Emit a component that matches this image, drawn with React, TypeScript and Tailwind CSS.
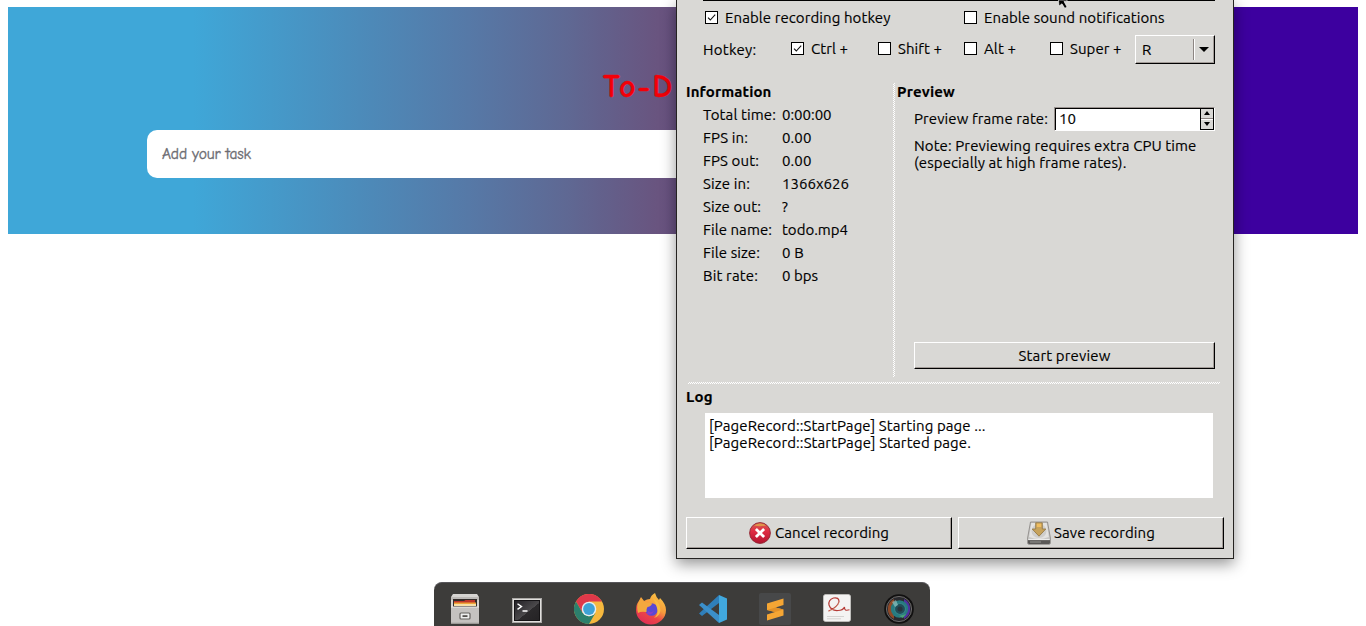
import { useLayoutEffect, useRef, useState } from "react";
import type { ReactNode } from "react";

/* Single line of text tracked so that it fills a given advance width. */
function Fit({ w, children, className = "" }: { w: number; children: string; className?: string }) {
  const ref = useRef<HTMLSpanElement>(null);
  const [spacing, setSpacing] = useState(0);
  useLayoutEffect(() => {
    if (!ref.current) return;
    const natural = ref.current.getBoundingClientRect().width - spacing * children.length;
    setSpacing((w - natural) / children.length);
  }, [w, children]);
  return (
    <span ref={ref} className={`inline-block whitespace-pre ${className}`} style={{ letterSpacing: `${spacing}px` }}>
      {children}
    </span>
  );
}

function Check({ label, w, checked = false, className = "" }: { label: string; w: number; checked?: boolean; className?: string }) {
  return (
    <label className={`flex items-center gap-[7px] ${className}`}>
      <span className="flex size-[13px] shrink-0 items-center justify-center border border-black bg-white">
        {checked && (
          <svg viewBox="0 0 9 9" className="size-[9px]" fill="none" stroke="#111" strokeWidth="1.1">
            <path d="M1 4.6 L3.3 7 L8.2 1.6" />
          </svg>
        )}
      </span>
      <Fit w={w}>{label}</Fit>
    </label>
  );
}

function Button({ children, className = "" }: { children: ReactNode; className?: string }) {
  return (
    <button
      className={`flex items-center justify-center border border-t-white border-l-white border-r-black border-b-black bg-[#d9d8d5] shadow-[inset_-1px_-1px_0_#a39c98] ${className}`}
    >
      {children}
    </button>
  );
}

const info: [string, number, string, number][] = [
  ["Total time:", 73, "0:00:00", 49.5],
  ["FPS in:", 45, "0.00", 29.5],
  ["FPS out:", 56, "0.00", 29.5],
  ["Size in:", 47, "1366x626", 67],
  ["Size out:", 58, "?", 7],
  ["File name:", 69, "todo.mp4", 66],
  ["File size:", 57, "0 B", 22],
  ["Bit rate:", 55, "0 bps", 36],
];

function CancelIcon() {
  return (
    <svg viewBox="0 0 22 22" className="size-[22px]">
      <defs>
        <linearGradient id="cancel" x1="0" y1="0" x2="0" y2="1">
          <stop offset="0" stopColor="#d4604f" />
          <stop offset=".4" stopColor="#e02d44" />
          <stop offset="1" stopColor="#b3142f" />
        </linearGradient>
      </defs>
      <circle cx="11" cy="11" r="10.4" fill="url(#cancel)" stroke="#8e2230" strokeWidth=".9" />
      <path d="M5 3.4 Q11 -.6 17 3.4 Q11 5 5 3.4" fill="#e0a04a" opacity=".85" />
      <path d="M6.900 6.900 L15.100 15.100 M15.100 6.900 L6.900 15.100" stroke="#fff" strokeWidth="2.800" />
    </svg>
  );
}

function SaveIcon() {
  return (
    <svg viewBox="0 0 24 24" className="size-6">
      <path d="M3.5 1 H20.5 L23.4 17 V22 Q23.4 23.3 22 23.3 H2 Q.6 23.3 .6 22 V17 Z" fill="#c9c8c6" stroke="#85827f" strokeWidth=".8" />
      <path d="M4.3 2 H19.7 L21.8 16 Q12 20 2.2 16 Z" fill="#e4e3e1" />
      <ellipse cx="12" cy="10" rx="7.5" ry="7" fill="#cfcecc" />
      <path d="M1 18.6 H23 V21.8 Q23 23 21.7 23 H2.3 Q1 23 1 21.8 Z" fill="#5b5957" />
      <path d="M1.2 18.6 H22.8" stroke="#f6f6f6" strokeWidth="1" />
      <path d="M3 21 H14" stroke="#8d8b88" strokeWidth="1.2" />
      <path d="M8.7 1.8 H15.3 V8 H18.8 L12 15.2 L5.2 8 H8.7 Z" fill="#c7a35c" stroke="#8f7340" strokeWidth=".8" />
      <path d="M9.8 2.6 H14.2 V6 H9.8 Z" fill="#efbd60" />
    </svg>
  );
}

function FilesIcon() {
  return (
    <svg viewBox="0 0 30 30" className="size-[30px]">
      <path d="M3 0 H27 L29 3 V30 H1 V3 Z" fill="#d6d4d2" />
      <path d="M1 3 H29 V6 H1 Z" fill="#bdbab8" />
      <rect x="3" y="5" width="24" height="9" fill="#322b29" />
      <path d="M4 7 H14 L15.500 6 H25 V9 H4 Z" fill="#bd3529" />
      <rect x="4" y="8.500" width="22" height="2" fill="#f0a539" />
      <rect x="4" y="10" width="22" height="2" fill="#f6dfa8" />
      <path d="M1 13 H29 V29 H1 Z" fill="#c5c2c0" />
      <path d="M1 13 H29" stroke="#eeecea" />
      <rect x="10" y="19" width="10" height="6" rx="1" fill="#eee" stroke="#65625f" strokeWidth="1.2" />
      <rect x="12.500" y="21.200" width="5" height="1.800" fill="#55524f" />
      <path d="M1 29.300 H29" stroke="#8d8a88" />
    </svg>
  );
}

function TerminalIcon() {
  return (
    <svg viewBox="0 0 30 30" className="size-[30px]">
      <defs>
        <linearGradient id="screen" x1="0" y1="0" x2="1" y2="1">
          <stop offset="0" stopColor="#232126" />
          <stop offset=".55" stopColor="#4b494b" />
          <stop offset=".56" stopColor="#2c2a2c" />
          <stop offset="1" stopColor="#252325" />
        </linearGradient>
      </defs>
      <rect x=".5" y="4.500" width="29" height="24" fill="#e0dfdd" stroke="#aaa8a6" />
      <rect x="2.500" y="6.500" width="25" height="20" fill="url(#screen)" stroke="#151315" />
      <path d="M5.500 9.800 L9.500 12.600 L5.500 15.400 M10.500 17 H15.500" fill="none" stroke="#fff" strokeWidth="1.400" />
    </svg>
  );
}

function ChromeIcon() {
  return (
    <svg viewBox="0 0 30 30" className="size-[30px]">
      <circle cx="15" cy="15" r="15" fill="#f6b83e" />
      <path d="M2 7.500 A15 15 0 0 1 28 7.500 H15 L8.500 18.750 Z" fill="#e0384a" />
      <path d="M2 7.500 A15 15 0 0 0 15 30 L21.500 18.750 L15 22.500 L8.500 18.750 Z" fill="#2c806d" />
      <circle cx="15" cy="15" r="7.300" fill="#e6eef2" />
      <circle cx="15" cy="15" r="5.900" fill="#3fa2d6" />
    </svg>
  );
}

function FirefoxIcon() {
  return (
    <svg viewBox="0 0 30 30" className="size-[30px] overflow-visible">
      <defs>
        <linearGradient id="fox" x1=".85" y1="0" x2=".3" y2="1">
          <stop offset="0" stopColor="#fbc845" />
          <stop offset=".45" stopColor="#f69c3c" />
          <stop offset=".7" stopColor="#ec4548" />
          <stop offset="1" stopColor="#e02d55" />
        </linearGradient>
      </defs>
      <path d="M3 7 L5 3 L8 7 Q11 5 14 5 Q15 1 19 -1 Q20 3 23 6 L24 4 Q30 10 30 16 A15 14.500 0 0 1 0 16 Q0 10 3 7 Z" fill="url(#fox)" />
      <circle cx="15.500" cy="15.500" r="6.300" fill="#5b48d4" />
      <path d="M3 7 L5 4 L8 7.500 Q11 9 16 9.200 Q16 12 11.500 13 Q10 15 10.500 18 Q5 17 2 19 Q0 12 3 7" fill="#f3a83e" />
      <path d="M17 4 Q24 8 24.500 16 Q24 22 18 24 Q23 20 21 14 Q20 9 17 4" fill="#f9bc43" />
      <path d="M12 17 Q15 19.500 18 16.500 Q16 22 11 20 Z" fill="#8a3fc8" />
    </svg>
  );
}

function CodeIcon() {
  return (
    <svg viewBox="0 0 30 30" className="size-[30px]">
      <path d="M21 1 V9 L4 22 L1 19.500 Z" fill="#2f7fba" />
      <path d="M1 11 L4 8.500 L21 21 V29 Z" fill="#3b8fca" />
      <path d="M21 1 L29 4.500 V25.500 L21 29 Z" fill="#41a8de" />
    </svg>
  );
}

function SublimeIcon() {
  return (
    <svg viewBox="0 0 32 32" className="size-8">
      <rect width="32" height="32" rx="2" fill="#474849" />
      <path d="M8 10.500 L24.500 5.500 V12 L16.500 14.500 L24.500 16.500 V22.500 L8 27.500 V21.500 L16 19 L8 17 Z" fill="#f5a634" />
      <path d="M8 17 L16.500 14.500 L24.500 16.500 L16 19 Z" fill="#e29129" />
    </svg>
  );
}

function NotesIcon() {
  return (
    <svg viewBox="0 0 28 28" className="mb-0.5 size-7" fill="none">
      <rect x=".4" y=".4" width="27.200" height="27.200" rx="2.500" fill="#f4f3f2" stroke="#c8c6c4" strokeWidth=".8" />
      <path d="M5.500 17 Q15 13 16 7.500 Q16 3 10.500 4 Q5 6 6 11 Q8 17 15 16.500 Q20 16.500 21.500 13 Q21 17.500 26.500 15.800" stroke="#b63b36" strokeWidth="1.200" />
      <path d="M5.500 17.500 Q15 13.500 16 8" stroke="#d9a07d" strokeWidth=".6" />
      <path d="M4 22.500 H21 M4 24.800 H18" stroke="#d5d3d1" strokeWidth="1" />
    </svg>
  );
}

function LensIcon() {
  return (
    <svg viewBox="0 0 30 30" className="size-[30px]">
      <circle cx="15" cy="15" r="14.800" fill="#111010" />
      <circle cx="15" cy="15" r="12.600" fill="#2a2a2e" stroke="#8b8886" strokeWidth=".7" />
      <path d="M10 5 A11.200 11.200 0 0 0 10 25 Z" fill="#8d4928" />
      <path d="M20 5 A11.200 11.200 0 0 1 20 25 Z" fill="#5131a0" />
      <circle cx="15.500" cy="15" r="8.700" fill="#277b80" />
      <circle cx="16" cy="15" r="5.500" fill="#214d58" stroke="#35858a" strokeWidth="1.200" />
      <circle cx="16" cy="15" r="2.500" fill="#28343c" />
      <path d="M8 8 L12 6 L14 11 L11 13 Z" fill="#a3cfca" opacity=".6" />
      <path d="M15 22 L22 20 L19 24 Z" fill="#4aa077" />
    </svg>
  );
}

const dock = [FilesIcon, TerminalIcon, ChromeIcon, FirefoxIcon, CodeIcon, SublimeIcon, NotesIcon, LensIcon];

function Recorder() {
  return (
    <section className="absolute top-0 left-[676px] flex h-[559px] w-[558px] flex-col border-x border-b border-[#252321] bg-[#d9d8d5] font-['Ubuntu','Noto_Sans',sans-serif] text-[15px] leading-[17px] text-black shadow-[0_5px_14px_rgba(0,0,0,0.42)] [-webkit-text-stroke:0.15px_#000]">
      <div className="ml-[26px] h-px w-[512px] shrink-0 bg-black" />
      <div className="mt-[7px] flex h-[18px] items-center pl-7">
        <Check label="Enable recording hotkey" w={165.5} checked className="w-[259px]" />
        <Check label="Enable sound notifications" w={180} />
      </div>
      <div className="mt-[9px] flex h-[29px] items-center pl-[26px]">
        <Fit w={53.5} className="-mt-px mr-[34.5px]">Hotkey:</Fit>
        <Check label="Ctrl +" w={37} checked className="-mt-0.5 w-[87px]" />
        <Check label="Shift +" w={44} className="-mt-0.5 w-[86px]" />
        <Check label="Alt +" w={32} className="-mt-0.5 w-[86px]" />
        <Check label="Super +" w={51.5} className="-mt-0.5 w-[85px]" />
        <Button className="h-[29px] w-[80px]">
          <span className="w-[54px] pl-1 text-left">R</span>
          <span className="mr-[4px] ml-px h-[21px] w-0.5 border-l border-[#8d8683] bg-white" />
          <span className="mr-[3px] h-0 w-0 border-x-[5px] border-t-[5px] border-x-transparent border-t-black" />
        </Button>
      </div>
      <div className="mt-[19px] flex h-[294px] shrink-0">
        <div className="w-[216px] pl-[9px]">
          <h2 className="flex h-[17px] font-bold"><Fit w={85.5}>Information</Fit></h2>
          <div className="mt-[3px] pl-[17px]">
            {info.map(([name, nw, value, vw]) => (
              <div key={name} className="flex h-[23px] items-center">
                <div className="w-[79px]"><Fit w={nw}>{name}</Fit></div>
                <Fit w={vw}>{value}</Fit>
              </div>
            ))}
          </div>
        </div>
        <div className="w-0.5 bg-[conic-gradient(#fff_25%,transparent_0_50%,#fff_0_75%,transparent_0)] bg-[size:2px_2px]" />
        <div className="flex w-[320px] flex-col pl-0.5">
          <h2 className="flex h-[17px] font-bold"><Fit w={58}>Preview</Fit></h2>
          <div className="mt-[6px] flex h-[25px] items-center pl-[17px]">
            <div className="w-[140px]"><Fit w={134}>Preview frame rate:</Fit></div>
            <div className="flex h-[24px] w-[161px] border border-t-[#98918e] border-l-[#98918e] border-r-white border-b-white bg-white">
              <div className="flex flex-1 items-center border-t border-l border-black pb-0.5 pl-[3px]">
                <Fit w={17}>10</Fit>
              </div>
              <div className="flex w-[14px] flex-col border border-black bg-[#d9d8d5]">
                <span className="flex h-[10px] items-center justify-center border-b border-[#8d8683]">
                  <span className="h-0 w-0 border-x-[3px] border-b-[4px] border-x-transparent border-b-black" />
                </span>
                <span className="flex flex-1 items-center justify-center border-t border-white">
                  <span className="h-0 w-0 border-x-[3px] border-t-[4px] border-x-transparent border-t-black" />
                </span>
              </div>
            </div>
          </div>
          <p className="mt-[6px] flex flex-col items-start pl-[17px]">
            <Fit w={282.5}>Note: Previewing requires extra CPU time</Fit>
            <Fit w={212.5}>(especially at high frame rates).</Fit>
          </p>
          <Button className="mt-auto mb-2 ml-[17px] h-[27px] w-[301px]">
            <Fit w={92}>Start preview</Fit>
          </Button>
        </div>
      </div>
      <div className="mt-[5px] ml-[11px] h-0.5 w-[532px] shrink-0 bg-[conic-gradient(#fff_25%,transparent_0_50%,#fff_0_75%,transparent_0)] bg-[size:2px_2px]" />
      <h2 className="mt-[4px] flex h-[17px] pl-[9px] font-bold"><Fit w={27}>Log</Fit></h2>
      <div className="mt-[8px] ml-7 flex h-[85px] w-[508px] shrink-0 flex-col items-start bg-white px-1 pt-[4px]">
        <Fit w={276.5}>[PageRecord::StartPage] Starting page ...</Fit>
        <Fit w={262}>[PageRecord::StartPage] Started page.</Fit>
      </div>
      <div className="mt-[19px] flex gap-1.5 pl-[9px]">
        <Button className="h-8 w-[266px] gap-1">
          <CancelIcon />
          <Fit w={114} className="-mt-px">Cancel recording</Fit>
        </Button>
        <Button className="h-8 w-[266px] gap-[3px]">
          <SaveIcon />
          <Fit w={101} className="-mt-px">Save recording</Fit>
        </Button>
      </div>
    </section>
  );
}

export default function App() {
  return (
    <main className="relative h-[626px] w-[1366px] overflow-hidden bg-white pt-[7px]">
      <header className="mx-2 h-[227px] bg-[linear-gradient(90deg,#3fa7d8_0px,#3fa7d8_185px,#4b8dbc_340px,#5679a7_460px,#5f6893_560px,#69547f_650px,#3d009f_1200px,#3d009f_100%)] px-[139px] pt-[59px] font-['Comic_Neue','Lato',sans-serif]">
        <h1 className="h-16 pl-[456px] text-[32px] leading-[42px] font-bold text-[#f30008] [-webkit-text-stroke:0.3px_#f30008]">
          <Fit w={71}>To-D</Fit>
        </h1>
        <div className="flex h-12 items-center rounded-[10px] bg-white px-[15px] pt-0.5 text-[15.500px] text-[#6c6c72] [-webkit-text-stroke:0.35px_#6c6c72]">
          <Fit w={89}>Add your task</Fit>
        </div>
      </header>
      <Recorder />
      <nav className="absolute bottom-0 left-[434px] flex h-11 w-[496px] items-center rounded-t-lg border-t border-[#57565a] bg-[#3d3c3a] pt-[9px]">
        {dock.map((Icon, i) => (
          <span key={i} className="flex w-[62px] items-center justify-center">
            <Icon />
          </span>
        ))}
      </nav>
      <svg viewBox="0 0 10 9" className="absolute top-0 left-[1058px] h-[9px] w-[10px]">
        <path d="M.5 0 H9 V1.500 H6 L9 7 L6.800 8.300 L4 3.800 L1 6 Z" fill="#000" stroke="#fff" strokeWidth=".6" />
      </svg>
    </main>
  );
}
